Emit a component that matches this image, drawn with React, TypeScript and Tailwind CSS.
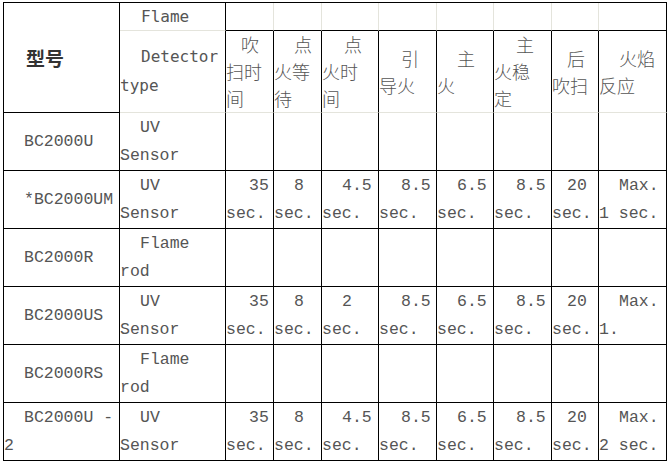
import React from 'react';

const serif = "font-['Liberation_Mono','Noto_Sans_CJK_SC',monospace] text-[16.5px] leading-[28px]";
const cjk = "font-['Noto_Sans_CJK_SC',sans-serif] font-light text-[18px] leading-[27px]";

// indent of the first line, per column (cols 3..10)
const numIndent = ['indent-[23px]', 'indent-[20px]', 'indent-[20px]', 'indent-[22px]', 'indent-[20px]', 'indent-[22px]', 'indent-[15px]', 'indent-[20px]'];
const headIndent = ['indent-[15px]', 'indent-[20px]', 'indent-[22px]', 'indent-[22px]', 'indent-[20px]', 'indent-[22px]', 'indent-[15px]', 'indent-[20px]'];

const headers: string[][] = [
  ['吹', '扫时', '间'],
  ['点', '火等', '待'],
  ['点', '火时', '间'],
  ['引', '导火'],
  ['主', '火'],
  ['主', '火稳', '定'],
  ['后', '吹扫'],
  ['火焰', '反应'],
];

type Row = { model: string[]; sensor: string[]; times: string[][] | null };

const full = (flame: string): string[][] => [
  ['35', 'sec.'],
  ['8', 'sec.'],
  [flame, 'sec.'],
  ['8.5', 'sec.'],
  ['6.5', 'sec.'],
  ['8.5', 'sec.'],
  ['20', 'sec.'],
];

const rows: Row[] = [
  { model: ['BC2000U'], sensor: ['UV', 'Sensor'], times: null },
  { model: ['*BC2000UM'], sensor: ['UV', 'Sensor'], times: [...full('4.5'), ['Max.', '1 sec.']] },
  { model: ['BC2000R'], sensor: ['Flame', 'rod'], times: null },
  { model: ['BC2000US'], sensor: ['UV', 'Sensor'], times: [...full('2'), ['Max.', '1.']] },
  { model: ['BC2000RS'], sensor: ['Flame', 'rod'], times: null },
  { model: ['BC2000U -', '2'], sensor: ['UV', 'Sensor'], times: [...full('4.5'), ['Max.', '2 sec.']] },
];

function Lines({ lines, className }: { lines: string[]; className: string }) {
  return (
    <div className={`w-full whitespace-nowrap ${className}`}>
      {lines.map((l, i) => (
        <React.Fragment key={i}>
          {i > 0 && <br />}
          {l}
        </React.Fragment>
      ))}
    </div>
  );
}

export default function App() {
  return (
    <div className="min-h-screen bg-white pt-[2px] pl-[3px] text-[#555]">
      <div className="grid w-fit grid-cols-[116px_106px_48px_48px_57px_58px_57px_58px_47px_68px] grid-rows-[28px_82px_repeat(6,58px)] border-t border-l border-black">
        {/* header, first strip */}
        <div className="row-span-2 flex items-center border-r border-b border-black">
          <Lines lines={['型号']} className="font-['Noto_Sans_CJK_SC',sans-serif] text-[19px] font-bold leading-[28px] text-[#333] indent-[22px]" />
        </div>
        <div className="flex items-center border-r border-b border-r-black border-b-[#e4e4dc]">
          <Lines lines={['Flame']} className="font-['DejaVu_Sans_Mono',monospace] text-[16px] leading-[28px] indent-[21px]" />
        </div>
        {headers.map((_, i) => (
          <div
            key={'s' + i}
            className={i === headers.length - 1 ? 'border-r border-b border-black' : 'border-r border-b border-r-[#e4e4dc] border-b-black'}
          />
        ))}

        {/* header, second strip */}
        <div className="flex items-center border-r border-b border-r-black border-b-[#e4e4dc]">
          <Lines lines={['Detector', 'type']} className="font-['DejaVu_Sans_Mono',monospace] text-[16px] leading-[28.5px] indent-[21px]" />
        </div>
        {headers.map((h, i) => (
          <div key={'h' + i} className="flex items-center border-r border-b border-r-black border-b-[#e4e4dc]">
            <Lines lines={h} className={`${cjk} ${headIndent[i]}`} />
          </div>
        ))}

        {/* body */}
        {rows.map((r, ri) => (
          <React.Fragment key={ri}>
            <div className="flex items-center border-r border-b border-black">
              <Lines lines={r.model} className={`${serif} indent-[20px]`} />
            </div>
            <div className="flex items-center border-r border-b border-black">
              <Lines lines={r.sensor} className={`${serif} indent-[20px]`} />
            </div>
            {headers.map((_, ci) => (
              <div key={ci} className="flex items-center border-r border-b border-black">
                {r.times && <Lines lines={r.times[ci]} className={`${serif} ${numIndent[ci]}`} />}
              </div>
            ))}
          </React.Fragment>
        ))}
      </div>
    </div>
  );
}
